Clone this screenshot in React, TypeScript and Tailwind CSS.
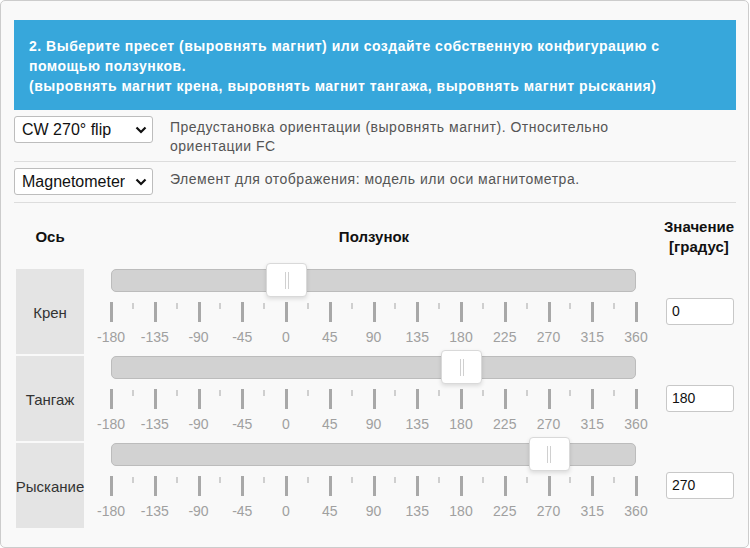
import React from "react";

const ticks: number[] = [];
for (let i = 0; i <= 24; i++) ticks.push(i);
const labels = [-180, -135, -90, -45, 0, 45, 90, 135, 180, 225, 270, 315, 360];

function Chevron() {
  return (
    <svg width="12" height="8" viewBox="0 0 12 8" className="shrink-0">
      <path d="M1.5 1.5 L6 6 L10.5 1.5" fill="none" stroke="#111" strokeWidth="2.2" />
    </svg>
  );
}

function Select({ text }: { text: string }) {
  return (
    <div className="w-[139px] h-[27px] bg-white border border-[#bdbdbd] rounded-[3px] flex items-center pl-[7px] pr-[5px] justify-between text-[16px] text-[#111] overflow-hidden whitespace-nowrap">
      <span className="overflow-hidden">{text}</span>
      <Chevron />
    </div>
  );
}

function Slider({ value }: { value: number }) {
  const pct = ((value + 180) / 540) * 100;
  return (
    <div className="relative h-full ml-[25px] mr-[26px]">
      <div className="h-[23px] bg-[#d2d2d2] border border-[#bcbcbc] rounded-[5px]" />
      <div
        className="absolute top-[-6px] w-[41px] h-[34px] -ml-[20px] bg-white border border-[#d9d9d9] rounded-[4px] shadow-[0_2px_4px_rgba(0,0,0,0.12)] flex items-center justify-center gap-[2px]"
        style={{ left: `${pct}%` }}
      >
        <div className="w-px h-[17px] bg-[#d0d0d0]" />
        <div className="w-px h-[17px] bg-[#d0d0d0]" />
      </div>
      {ticks.map((i) => (
        <div
          key={i}
          className={
            i % 2 === 0
              ? "absolute top-[33px] w-[3px] h-[20px] -ml-px bg-[#a8a8a8]"
              : "absolute top-[34px] w-[2px] h-[6px] -ml-px bg-[#cfcfcf]"
          }
          style={{ left: `${(i / 24) * 100}%` }}
        />
      ))}
      {labels.map((l, i) => (
        <div
          key={l}
          className="absolute top-[58px] w-[40px] -ml-[20px] text-center text-[14px] leading-[20px] text-[#a0a0a0]"
          style={{ left: `${(i / 12) * 100}%` }}
        >
          {l}
        </div>
      ))}
    </div>
  );
}

function Row({ name, value }: { name: string; value: number }) {
  return (
    <div className="flex h-[85px] gap-[2px]">
      <div className="w-[68px] bg-[#e4e4e4] flex items-center justify-center text-[15px] text-[#333] whitespace-nowrap pt-[3px]">
        {name}
      </div>
      <div className="flex-1">
        <Slider value={value} />
      </div>
      <div className="w-[70px] flex items-center pl-[2px]">
        <div className="w-[68px] h-[27px] bg-white border border-[#c8c8c8] rounded-[3px] flex items-center pl-[5px] text-[14px] text-[#111]">
          {value}
        </div>
      </div>
    </div>
  );
}

export default function App() {
  return (
    <div className="w-[750px] h-[548px] bg-white" style={{ fontFamily: '"Liberation Sans", Arial, sans-serif' }}>
      <div className="w-[749px] h-[548px] bg-[#f9f9f9] border border-[#cccccc] rounded-[5px] pl-[13px] pt-[19px]">
        <div className="w-[722px] h-[90px] bg-[#37a7db] text-white font-bold text-[14px] tracking-[0.5px] leading-[20px] pl-[15px] pt-[16px]">
          <div>2. Выберите пресет (выровнять магнит) или создайте собственную конфигурацию с</div>
          <div>помощью ползунков.</div>
          <div>(выровнять магнит крена, выровнять магнит тангажа, выровнять магнит рыскания)</div>
        </div>
        <div className="w-[722px]">
          <div className="flex pt-[6px] pb-[19px] border-b border-[#dddddd] h-[52px]">
            <Select text="CW 270° flip" />
            <div className="ml-[17px] w-[470px] text-[14px] tracking-[0.5px] leading-[19px] text-[#555] pt-[2px]">
              Предустановка ориентации (выровнять магнит). Относительно ориентации FC
            </div>
          </div>
          <div className="flex pt-[6px] h-[41px] border-b border-[#dddddd]">
            <Select text="Magnetometer" />
            <div className="ml-[17px] text-[14px] tracking-[0.5px] leading-[19px] text-[#555] pt-[2px]">
              Элемент для отображения: модель или оси магнитометра.
            </div>
          </div>
          <div className="px-[2px] pt-[2px]">
            <div className="flex h-[64px] gap-[2px] font-bold text-[15px] text-[#111]">
              <div className="w-[68px] flex items-center justify-center">Ось</div>
              <div className="flex-1 flex items-center justify-center">Ползунок</div>
              <div className="w-[70px] flex flex-col items-center justify-center leading-[20px]">
                <div>Значение</div>
                <div>[градус]</div>
              </div>
            </div>
            <div className="flex flex-col gap-[2px]">
              <Row name="Крен" value={0} />
              <Row name="Тангаж" value={180} />
              <Row name="Рыскание" value={270} />
            </div>
          </div>
        </div>
      </div>
    </div>
  );
}
